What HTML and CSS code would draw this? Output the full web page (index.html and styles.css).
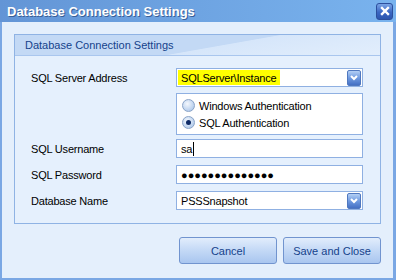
FILE: index.html
```html
<!DOCTYPE html>
<html lang="en">

<head>
  <meta charset="UTF-8" />
  <title>Database Connection Settings</title>
  <link rel="stylesheet" href="styles.css">
</head>

<body>
  <div class="window">
    <header class="titlebar">
      <h1>Database Connection Settings</h1>
      <button class="close" type="button">
        <svg width="10" height="10" viewBox="0 0 10 10">
          <path d="M2 2 L8 8 M8 2 L2 8" stroke="#fff" stroke-width="2.4" stroke-linecap="square" />
        </svg>
      </button>
    </header>
    <main class="frame">
      <section class="group">
        <div class="group-head">Database Connection Settings</div>
        <div class="group-body">
          <div class="row">
            <label>SQL Server Address</label>
            <div class="box combo">
              <span class="selected">SQLServer\Instance</span>
              <span class="drop">
                <svg width="10" height="8" viewBox="0 0 10 8">
                  <path d="M2 2 L5 5 L8 2" fill="none" stroke="#fff" stroke-width="2" />
                </svg>
              </span>
            </div>
          </div>
          <div class="row row-radio">
            <span></span>
            <div class="box radios">
              <div class="radio"><span class="dot"></span>Windows Authentication</div>
              <div class="radio"><span class="dot on"></span>SQL Authentication</div>
            </div>
          </div>
          <div class="row row-field">
            <label>SQL Username</label>
            <div class="box">sa<span class="caret"></span></div>
          </div>
          <div class="row row-field">
            <label>SQL Password</label>
            <div class="box pass">●●●●●●●●●●●●●●</div>
          </div>
          <div class="row row-field">
            <label>Database Name</label>
            <div class="box combo">
              <span>PSSSnapshot</span>
              <span class="drop">
                <svg width="10" height="8" viewBox="0 0 10 8">
                  <path d="M2 2 L5 5 L8 2" fill="none" stroke="#fff" stroke-width="2" />
                </svg>
              </span>
            </div>
          </div>
        </div>
      </section>
      <div class="actions">
        <button class="btn" type="button">Cancel</button>
        <button class="btn" type="button">Save and Close</button>
      </div>
    </main>
  </div>
</body>

</html>
```

FILE: styles.css
```css
* {
  box-sizing: border-box;
}

body {
  margin: 0;
  font-family: "Liberation Sans", Arial, sans-serif;
  font-size: 11px;
}

.window {
  width: 396px;
  height: 280px;
  display: flex;
  flex-direction: column;
}

.titlebar {
  height: 22px;
  display: flex;
  align-items: center;
  justify-content: space-between;
  padding: 0 3px 0 7px;
  background: linear-gradient(to right, #6395d6, #79b3ee);
}

.titlebar h1 {
  margin: 0;
  font-size: 13px;
  font-weight: 700;
  color: white;
  text-shadow: 1px 1px 0 #3a5f97;
}

.close {
  width: 17px;
  height: 17px;
  padding: 0;
  display: grid;
  place-items: center;
  border: 1px solid #2c4f9c;
  border-radius: 3px;
  background: linear-gradient(#7aa4e6, #3a66c2 55%, #2d56ae);
}

.frame {
  flex: 1;
  display: flex;
  flex-direction: column;
  padding: 12px 12px 0 12px;
  background: #e4effc;
  border-left: 2px solid #7aa7e4;
  border-right: 3px solid #7aa7e4;
  border-bottom: 2px solid #7aa7e4;
}

.group {
  height: 190px;
  border: 1px solid #8fb3e4;
  background: #e5f0fd;
}

.group-head {
  height: 21px;
  padding-left: 10px;
  display: flex;
  align-items: center;
  color: #15428b;
  border-bottom: 1px solid #a9c6ee;
  background: linear-gradient(170deg, #c3d9f5 55%, #d6e6fa 56%, #e2eefc);
}

.group-body {
  padding: 12px 17px 0 16px;
}

.row {
  display: grid;
  grid-template-columns: 145px 187px;
  align-items: center;
  letter-spacing: -0.2px;
}

.row label {
  color: #000;
}

.row-radio {
  margin-top: 6px;
}

.row-field {
  margin-top: 4px;
}

.row-field + .row-field {
  margin-top: 7px;
}

.box {
  height: 19px;
  border: 1px solid #8fb0e2;
  background: white;
  display: flex;
  align-items: center;
  padding-left: 4px;
}

.combo {
  justify-content: space-between;
  padding: 0 1px;
}

.combo > span:first-child {
  padding-left: 3px;
}

.selected {
  background: #ffff00;
  height: 15px;
  display: flex;
  align-items: center;
  padding-right: 4px;
}

.drop {
  width: 14px;
  height: 16px;
  display: grid;
  place-items: center;
  border: 1px solid #5078bf;
  border-radius: 2px;
  background: linear-gradient(#b3cff5, #6f9ae0 50%, #4470c4);
}

.radios {
  height: 42px;
  flex-direction: column;
  align-items: stretch;
  padding: 3px 0 0 5px;
}

.radio {
  height: 17px;
  display: flex;
  align-items: center;
  gap: 4px;
}

.dot {
  width: 13px;
  height: 13px;
  border-radius: 50%;
  border: 1px solid #8aa4c8;
  background: radial-gradient(circle at 40% 35%, #f4f8fd, #b9d0ee 70%, #9fbbe2);
  display: grid;
  place-items: center;
}

.dot.on::after {
  content: "";
  width: 5px;
  height: 5px;
  border-radius: 50%;
  background: #0d2a66;
}

.caret {
  width: 1px;
  height: 14px;
  margin-left: 1px;
  background: #000;
}

.pass {
  font-size: 11px;
  letter-spacing: 0;
}

.actions {
  margin-top: 13px;
  display: flex;
  justify-content: flex-end;
  gap: 6px;
}

.btn {
  width: 98px;
  height: 27px;
  font-family: inherit;
  font-size: 11px;
  color: #15428b;
  border: 1px solid #7194cf;
  border-radius: 3px;
  background: linear-gradient(#e2edfc, #c6daf6 45%, #a9c6ef);
}
```
